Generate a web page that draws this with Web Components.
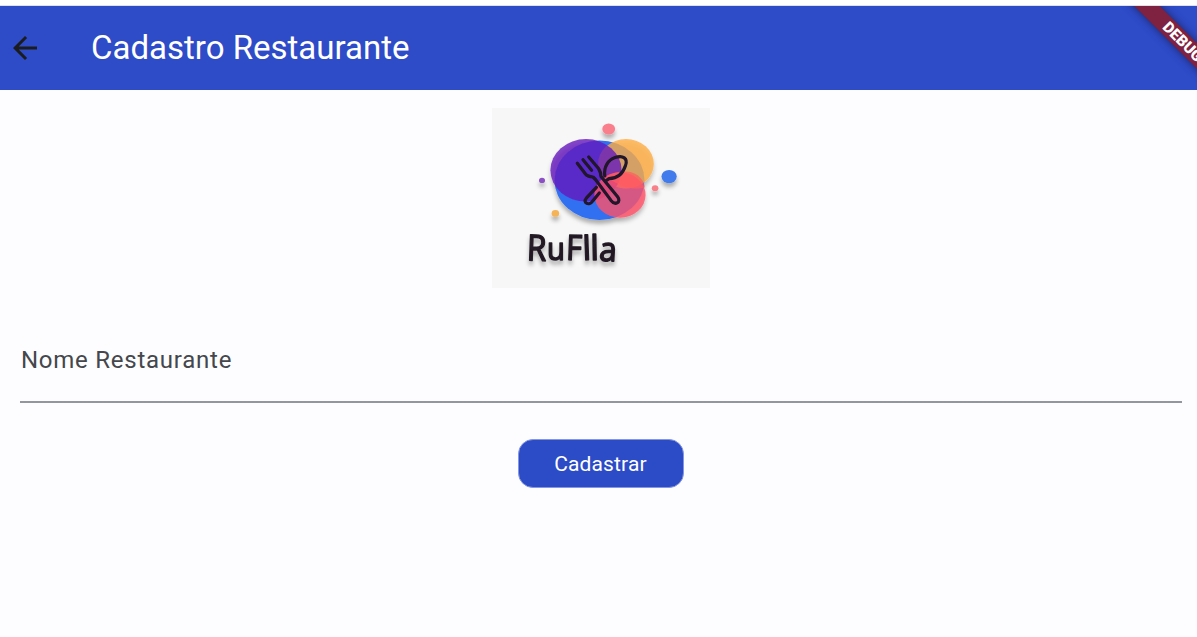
<!DOCTYPE html>
<html lang="pt-BR">
<head>
<meta charset="utf-8">
<title>Cadastro Restaurante</title>
<style>
html,body{margin:0;height:100%;overflow:hidden}
body{font-family:Roboto,sans-serif;background:#fdfdff}
</style>
</head>
<body>
<register-page></register-page>
<script>
const define = (name, html) => customElements.define(name, class extends HTMLElement {
  constructor() {
    super();
    this.attachShadow({ mode: 'open' }).innerHTML = html;
  }
});

define('debug-banner', `
<style>
:host{position:absolute;right:0;top:0;width:84px;height:84px;overflow:hidden;display:block}
div{position:absolute;left:-6px;top:25.5px;width:150px;height:18px;transform:rotate(45deg);background:#7f2141;box-shadow:0 0 9px rgba(0,0,0,.5);color:#fff;font:900 15.3px/18px Roboto,sans-serif;text-align:center;text-indent:2px}
</style>
<div><slot></slot></div>`);

define('app-bar', `
<style>
:host{display:flex;align-items:center;position:relative;overflow:hidden;box-sizing:border-box;height:84px;background:#2e4bc8;color:#fff;padding-left:7px}
svg{width:36px;height:36px;flex:none;fill:#1b1c1e}
h1{margin:0 0 0 48px;font-size:33px;font-weight:400;line-height:42px;white-space:nowrap}
</style>
<svg viewBox="0 0 24 24"><path d="M20 11H7.83l5.59-5.59L12 4l-8 8 8 8 1.41-1.41L7.83 13H20v-2z"/></svg>
<h1><slot></slot></h1>
<slot name="banner"></slot>`);

define('brand-logo', `
<style>
:host{display:block;width:218px;height:180px;background:#f7f7f7}
svg{display:block;width:100%;height:100%}
text{font-family:"Open Sans",sans-serif;font-weight:400;fill:#211a25;stroke:#211a25;stroke-width:1.5;stroke-linejoin:round}
</style>
<svg viewBox="492 108 218 180">
<defs>
<filter id="s" x="-30%" y="-30%" width="160%" height="180%"><feDropShadow dx="0" dy="4" stdDeviation="2.3" flood-color="#000" flood-opacity=".3"/></filter>
<filter id="soft"><feGaussianBlur stdDeviation=".6"/></filter>
</defs>
<g filter="url(#soft)">
<g filter="url(#s)">
<ellipse cx="599.5" cy="180.3" rx="45" ry="39.7" fill="#306ff2"/>
<ellipse cx="626" cy="163.7" rx="27.8" ry="24.7" fill="#ffad42" fill-opacity=".8"/>
<ellipse cx="586" cy="170.3" rx="35.6" ry="31.3" fill="#651bbd" fill-opacity=".8"/>
<ellipse cx="620" cy="195" rx="25.6" ry="22.7" fill="#ff5268" fill-opacity=".8"/>
<ellipse cx="608.7" cy="129" rx="6.4" ry="5.6" fill="#fa7f8c"/>
<ellipse cx="669.1" cy="176.6" rx="7.6" ry="6.7" fill="#427cec"/>
<ellipse cx="655.1" cy="188.3" rx="3.3" ry="3" fill="#f78089"/>
<ellipse cx="542" cy="180.4" rx="3" ry="2.7" fill="#8c50c4"/>
<ellipse cx="555.4" cy="213.4" rx="3.8" ry="3.4" fill="#f5b359"/>
</g>
<path d="M626 171.5C639 172 645 182 644.8 187.6C636 190 622 189 606.5 176.5Q615 171 626 171.5Z" fill="#ff5b60" fill-opacity=".7"/>
<g fill="none" stroke="#20142a" stroke-width="3.2" stroke-linecap="round" stroke-linejoin="round">
<path d="M577.3 163.3L585.5 174Q587.5 176.6 593 177L595.5 179.5L611 200.4C615.5 206 621.5 202 617.6 196.8L601 176.5Q600.8 172 598.5 168.5L588.7 157"/>
<path d="M583 159.7L591.6 170.2"/>
<path d="M604.8 176C603.5 167 608 160 615 157.6C623 154.8 628.2 158.4 625.5 165.5C623 173.5 617 178.4 609 178.6L606 180.8"/>
<path d="M596.4 187.3L586.3 198.2C582.3 203.2 589.5 205.8 592.3 201.5L599.3 193"/>
</g>
<g filter="url(#s)">
<text font-size="36" transform="translate(526.5 260.3) rotate(2) scale(.88 1)">R</text>
<text font-size="31" transform="translate(547 260) scale(.94 1)">u</text>
<text font-size="35" transform="translate(565.7 259.8) rotate(2) scale(.88 1)">F</text>
<text font-size="33" transform="translate(583 260) rotate(-2)">l</text>
<text font-size="34" transform="translate(590.6 260) rotate(-1)">l</text>
<text font-size="33" transform="translate(598.8 260.5) rotate(3) scale(.96 1)">a</text>
</g>
</g>
</svg>`);

define('text-field', `
<style>
:host{display:flex;box-sizing:border-box;height:84px;border-bottom:2px solid #92969e;color:#44474c;padding:26px 0 0 1px;font-size:24px;line-height:30px;letter-spacing:.75px}
</style>
<label><slot></slot></label>`);

define('filled-button', `
<style>
:host{display:block}
button{display:block;width:166px;height:49px;box-sizing:border-box;border:1px solid #8396df;border-radius:15px;padding:1px 0 0;background:#2c4bc7;color:#fff;font:400 21px/46px Roboto,sans-serif;letter-spacing:.15px}
</style>
<button><slot></slot></button>`);

define('register-page', `
<style>
:host{display:flex;flex-direction:column;height:637px;box-sizing:border-box;border-top:5px solid #fff}
.edge{height:1px;background:#dfe1e7;flex:none}
app-bar{flex:none}
main{display:flex;flex-direction:column;align-items:center;padding:18px 15px 0 20px}
brand-logo{margin-left:-1px}
text-field{align-self:stretch;margin-top:31px}
filled-button{margin-top:36px;margin-left:-1px}
</style>
<div class="edge"></div>
<app-bar>Cadastro Restaurante<debug-banner slot="banner">DEBUG</debug-banner></app-bar>
<main>
<brand-logo></brand-logo>
<text-field>Nome Restaurante</text-field>
<filled-button>Cadastrar</filled-button>
</main>`);
</script>
</body>
</html>
